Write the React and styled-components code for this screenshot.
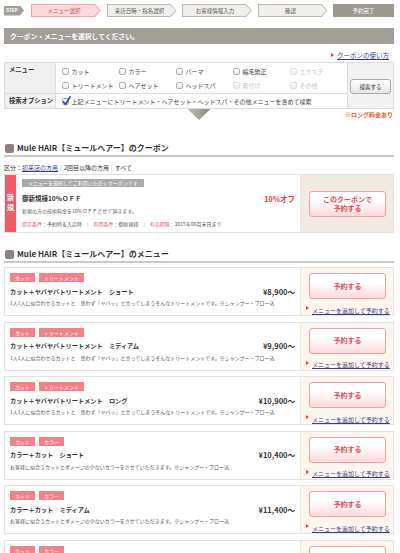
import React from 'react';
import styled, { createGlobalStyle } from 'styled-components';

const GlobalStyle = createGlobalStyle`
  html, body {
    margin: 0;
    padding: 0;
    overflow: hidden;
    background: #fff;
  }
  body {
    font-family: "Noto Sans CJK JP", "Noto Sans", sans-serif;
    color: #333;
  }
  * { box-sizing: border-box; }
`;

const Page = styled.div`
  width: 390px;
  margin-left: 4px;
  padding-top: 4px;
`;

// step bar
const StepBar = styled.div`
  display: flex;
  align-items: center;
  height: 13px;
`;

const StepBadge = styled.div`
  width: 20px;
  height: 10px;
  margin-right: 7px;
  padding-left: 2px;
  display: flex;
  align-items: center;
  background: #a29f98;
  color: #fff;
  font: bold 4.5px "Liberation Sans", sans-serif;
  clip-path: polygon(0 0, 16px 0, 100% 50%, 16px 100%, 0 100%);
`;

const stepColors = {
  active: { border: '#f2a3ac', bg: '#fdd8dc', color: '#c9505f' },
  todo: { border: '#bdbab3', bg: '#efeeeb', color: '#555' },
  done: { border: '#9c9991', bg: '#9c9991', color: '#fff' },
};

const arrow = (t) =>
  `polygon(0 0, calc(100% - ${t}px) 0, 100% 50%, calc(100% - ${t}px) 100%, 0 100%)`;

const Step = styled.div`
  width: ${p => p.$w}px;
  height: 13px;
  margin-right: 5.5px;
  padding: 1px;
  background: ${p => stepColors[p.$state].border};
  clip-path: ${p => (p.$state === 'done' ? 'none' : arrow(6))};
  &:last-child { margin-right: 0; }
`;

const StepFace = styled.div`
  height: 100%;
  padding-right: ${p => (p.$state === 'done' ? 0 : 4)}px;
  display: flex;
  align-items: center;
  justify-content: center;
  background: ${p => stepColors[p.$state].bg};
  color: ${p => stepColors[p.$state].color};
  font-size: 5.5px;
  clip-path: ${p => (p.$state === 'done' ? 'none' : arrow(5.5))};
`;

const TitleBar = styled.h1`
  margin: 11px 0 0;
  height: 16px;
  padding-left: 6px;
  display: flex;
  align-items: center;
  background: #a29f98;
  color: #fff;
  font-size: 6.8px;
  font-weight: bold;
`;

const HelpRow = styled.div`
  margin-top: 6px;
  height: 10px;
  padding-right: 5px;
  display: flex;
  justify-content: flex-end;
  align-items: center;
`;

const Link = styled.a`
  color: #3a3f7d;
  text-decoration: underline;
  font-size: ${p => p.$size || 6.5}px;
  white-space: nowrap;
  cursor: pointer;
`;

const Bullet = styled.span`
  display: inline-block;
  width: 0;
  height: 0;
  margin-right: 3px;
  border-left: 3px solid #e8404a;
  border-top: 2px solid transparent;
  border-bottom: 2px solid transparent;
  vertical-align: middle;
`;

// search table
const SearchTable = styled.div`
  margin-top: 2px;
  display: grid;
  grid-template-columns: 50px 291px 45px;
  grid-template-rows: 30px 14px;
  gap: 1px;
  padding: 1px;
  background: #dcdcdc;
`;

const LabelCell = styled.div`
  padding: ${p => (p.$top ? '3px 0 0 4px' : '0 0 0 4px')};
  display: flex;
  align-items: ${p => (p.$top ? 'flex-start' : 'center')};
  background: #efefef;
  font-size: 6.3px;
  font-weight: bold;
  line-height: 8px;
  white-space: nowrap;
`;

const CheckCell = styled.div`
  padding-left: 6px;
  display: grid;
  grid-template-columns: repeat(5, 57px);
  grid-auto-rows: 14px;
  align-content: center;
  background: #fff;
`;

const CheckItem = styled.label`
  display: flex;
  align-items: center;
  gap: 2.5px;
  font-size: 6px;
  color: ${p => (p.$off ? '#c4c4c4' : '#444')};
  white-space: nowrap;
`;

const Box = styled.span`
  position: relative;
  width: 7px;
  height: 7px;
  flex: none;
  border: 1px solid ${p => (p.$off ? '#dedede' : '#b2b2b2')};
  border-radius: 2px;
  background: linear-gradient(#fff, #e9e9e9);

  & > svg {
    position: absolute;
    left: -1px;
    top: -3px;
  }
`;

const OptionCell = styled.div`
  padding-left: 6px;
  display: flex;
  align-items: center;
  background: #fff;
`;

const ButtonCell = styled.div`
  grid-column: 3;
  grid-row: 1 / 3;
  display: flex;
  align-items: center;
  justify-content: center;
  background: #f2f2f2;
`;

const SearchButton = styled.button`
  width: 41px;
  height: 15px;
  padding: 0;
  margin-top: 2px;
  border: 1px solid #a9a9a9;
  border-radius: 3px;
  background: linear-gradient(#fff, #e6e6e6);
  color: #333;
  font-family: inherit;
  font-size: 5.5px;
`;

const PointerRow = styled.div`
  display: grid;
  grid-template-columns: 1fr 23px 1fr;
  height: 14px;
`;

const Pointer = styled.div`
  grid-column: 2;
  width: 23px;
  height: 11px;
  background: linear-gradient(90deg, #bdbab4, #8c8982);
  clip-path: polygon(0 0, 100% 0, 50% 100%);
`;

const LongNote = styled.div`
  justify-self: end;
  margin-top: 2px;
  padding-right: 1px;
  color: #f25a1e;
  font-size: 6px;
  font-weight: bold;
  line-height: 8px;
`;

// sections
const SectionHeader = styled.h2`
  margin: ${p => p.$gap}px 0 0;
  height: 15px;
  padding: 0 0 1px 1px;
  display: flex;
  align-items: center;
  gap: 3px;
  border-bottom: 2px solid #c9c9c9;
  font-size: 8px;
  font-weight: bold;
  line-height: 12px;
  color: #333;
`;

const HeaderIcon = styled.span`
  width: 9px;
  height: 9px;
  border-radius: 2px;
  background: #8e817e;
`;

const FilterLine = styled.div`
  margin-top: 6px;
  line-height: 10px;
  font-size: 6px;
  color: #333;
  white-space: nowrap;
`;

const Sep = styled.span`
  margin: 0 ${p => p.$m || 2}px;
  color: #aaa;
`;

const CouponCard = styled.div`
  margin-top: 1px;
  height: 59px;
  display: flex;
  border: 1px solid #e3e3e3;
`;

const NewBand = styled.div`
  width: 11px;
  display: flex;
  align-items: center;
  justify-content: center;
  background: #f25b66;
  color: #fff;
  font-size: 7px;
  font-weight: bold;
  writing-mode: vertical-rl;
  letter-spacing: 3px;
`;

const CouponBody = styled.div`
  flex: 1;
  padding: 4px 5px 0 6px;
`;

const CouponLabel = styled.div`
  width: fit-content;
  height: 8px;
  padding: 0 6px;
  background: #a9a9a9;
  color: #fff;
  font-size: 5px;
  line-height: 8px;
`;

const TitleRow = styled.div`
  margin-top: ${p => p.$gap}px;
  height: 10px;
  display: flex;
  align-items: center;
  justify-content: space-between;
`;

const CouponTitle = styled.div`
  font-size: 6.5px;
  font-weight: bold;
`;

const Discount = styled.div`
  color: #f03a3a;
  font-size: 7.5px;
  font-weight: bold;
`;

const SmallText = styled.div`
  margin-top: ${p => p.$gap}px;
  line-height: 8px;
  font-size: 5px;
  color: #555;
  white-space: nowrap;
`;

const CondKey = styled.span`
  color: #d9646e;
`;

const SidePanel = styled.div`
  width: 93px;
  flex: none;
  padding: ${p => (p.$center ? '0 8px' : '5px 8px 0')};
  display: flex;
  flex-direction: column;
  justify-content: ${p => (p.$center ? 'center' : 'flex-start')};
  border-left: 1px solid #efe9e2;
  background: ${p => (p.$center ? '#f0eae3' : '#fdf6ef')};
`;

const ReserveButton = styled.button`
  width: 77px;
  height: 26px;
  padding: 0;
  flex: none;
  border: 1px solid #efa0a8;
  border-radius: 3px;
  background: linear-gradient(#fff 35%, #fbd8dc);
  color: #e64d5a;
  font-family: inherit;
  font-size: 7px;
  font-weight: bold;
  line-height: 9px;
`;

const AddLinkRow = styled.div`
  margin: 2.5px 0 0 -3px;
  line-height: 8px;
  white-space: nowrap;
`;

const MenuList = styled.div`
  margin-top: 4px;
  display: flex;
  flex-direction: column;
  gap: 5.5px;
`;

const MenuCard = styled.div`
  height: 49px;
  flex: none;
  display: flex;
  border: 1px solid #e3e3e3;
`;

const MenuMain = styled.div`
  flex: 1;
  min-width: 0;
  padding: 5px 5px 0;
`;

const Tags = styled.div`
  display: flex;
  gap: 4px;
  height: 9px;
`;

const Tag = styled.span`
  padding: 0 5px;
  background: #f68088;
  color: #fff;
  font-size: 5px;
  line-height: 9px;
`;

const MenuName = styled.div`
  font-size: 6.2px;
  font-weight: bold;
  white-space: nowrap;
`;

const Price = styled.div`
  font-size: 7.5px;
  font-weight: bold;
  color: #333;
`;

const steps = [
  { label: 'メニュー選択', state: 'active', w: 70 },
  { label: '来店日時・指名選択', state: 'todo', w: 70 },
  { label: 'お客様情報入力', state: 'todo', w: 70 },
  { label: '確認', state: 'todo', w: 70 },
  { label: '予約完了', state: 'done', w: 61 },
];

const checks = [
  ['カット', false], ['カラー', false], ['パーマ', false], ['縮毛矯正', false], ['エクステ', true],
  ['トリートメント', false], ['ヘアセット', false], ['ヘッドスパ', false], ['着付け', true], ['その他', true],
];

const yaba = '1人1人に似合わせるカットと　思わず「ヤバッ」と言ってしまうそんなトリートメントです。※シャンプー・ブロー込';
const color = 'お客様に似合うカットとダメージの少ないカラーをさせていただきます。※シャンプー・ブロー込';

const menus = [
  { tags: ['カット', 'トリートメント'], name: 'カット＋ヤバヤバトリートメント　ショート', price: '¥8,900〜', desc: yaba },
  { tags: ['カット', 'トリートメント'], name: 'カット＋ヤバヤバトリートメント　ミディアム', price: '¥9,900〜', desc: yaba },
  { tags: ['カット', 'トリートメント'], name: 'カット＋ヤバヤバトリートメント　ロング', price: '¥10,900〜', desc: yaba },
  { tags: ['カット', 'カラー'], name: 'カラー＋カット　ショート', price: '¥10,400〜', desc: color },
  { tags: ['カット', 'カラー'], name: 'カラー＋カット　ミディアム', price: '¥11,400〜', desc: color },
  { tags: ['カット', 'カラー'], name: 'カラー＋カット　ロング', price: '¥12,400〜', desc: color },
];

function CheckMark() {
  return (
    <svg width="9" height="10" viewBox="0 0 9 10">
      <path d="M1.5 6 L3.6 8.4 L8 1" fill="none" stroke="#2b4f9c" strokeWidth="1.8" strokeLinecap="round" strokeLinejoin="round" />
    </svg>
  );
}

function App() {
  return (
    <Page>
      <GlobalStyle />
      <StepBar>
        <StepBadge>STEP</StepBadge>
        {steps.map(s => (
          <Step key={s.label} $w={s.w} $state={s.state}>
            <StepFace $state={s.state}>{s.label}</StepFace>
          </Step>
        ))}
      </StepBar>

      <TitleBar>クーポン・メニューを選択してください。</TitleBar>

      <HelpRow>
        <Bullet />
        <Link>クーポンの使い方</Link>
      </HelpRow>

      <SearchTable>
        <LabelCell $top>メニュー</LabelCell>
        <CheckCell>
          {checks.map(([label, off]) => (
            <CheckItem key={label} $off={off}>
              <Box $off={off} />
              {label}
            </CheckItem>
          ))}
        </CheckCell>
        <ButtonCell>
          <SearchButton>検索する</SearchButton>
        </ButtonCell>
        <LabelCell>検索オプション</LabelCell>
        <OptionCell>
          <CheckItem>
            <Box><CheckMark /></Box>
            上記メニューにトリートメント・ヘアセット・ヘッドスパ・その他メニューを含めて検索
          </CheckItem>
        </OptionCell>
      </SearchTable>

      <PointerRow>
        <Pointer />
        <LongNote>※ロング料金あり</LongNote>
      </PointerRow>

      <SectionHeader $gap={19}>
        <HeaderIcon />
        Mule HAIR【ミュールヘアー】のクーポン
      </SectionHeader>

      <FilterLine>
        区分：<Link $size={6}>初来店の方用</Link>
        <Sep>|</Sep>2回目以降の方用<Sep>|</Sep>すべて
      </FilterLine>

      <CouponCard>
        <NewBand>新規</NewBand>
        <CouponBody>
          <CouponLabel>メニューを選択してご利用いただくクーポンです</CouponLabel>
          <TitleRow $gap={6}>
            <CouponTitle>御新規様10%ＯＦＦ</CouponTitle>
            <Discount>10%オフ</Discount>
          </TitleRow>
          <SmallText $gap={4}>新規の方の技術料金を10%ＯＦＦさせて頂きます。</SmallText>
          <SmallText $gap={5}>
            <CondKey>提示条件：</CondKey>予約時＆入店時<Sep $m={5}>|</Sep>
            <CondKey>利用条件：</CondKey>御新規様<Sep $m={5}>|</Sep>
            <CondKey>有効期限：</CondKey>2015年06月末日まで
          </SmallText>
        </CouponBody>
        <SidePanel $center>
          <ReserveButton>このクーポンで<br />予約する</ReserveButton>
        </SidePanel>
      </CouponCard>

      <SectionHeader $gap={15}>
        <HeaderIcon />
        Mule HAIR【ミュールヘアー】のメニュー
      </SectionHeader>

      <MenuList>
        {menus.map(m => (
          <MenuCard key={m.name}>
            <MenuMain>
              <Tags>
                {m.tags.map(t => <Tag key={t}>{t}</Tag>)}
              </Tags>
              <TitleRow $gap={4}>
                <MenuName>{m.name}</MenuName>
                <Price>{m.price}</Price>
              </TitleRow>
              <SmallText $gap={3}>{m.desc}</SmallText>
            </MenuMain>
            <SidePanel>
              <ReserveButton>予約する</ReserveButton>
              <AddLinkRow>
                <Bullet />
                <Link $size={6}>メニューを追加して予約する</Link>
              </AddLinkRow>
            </SidePanel>
          </MenuCard>
        ))}
      </MenuList>
    </Page>
  );
}

export default App;
